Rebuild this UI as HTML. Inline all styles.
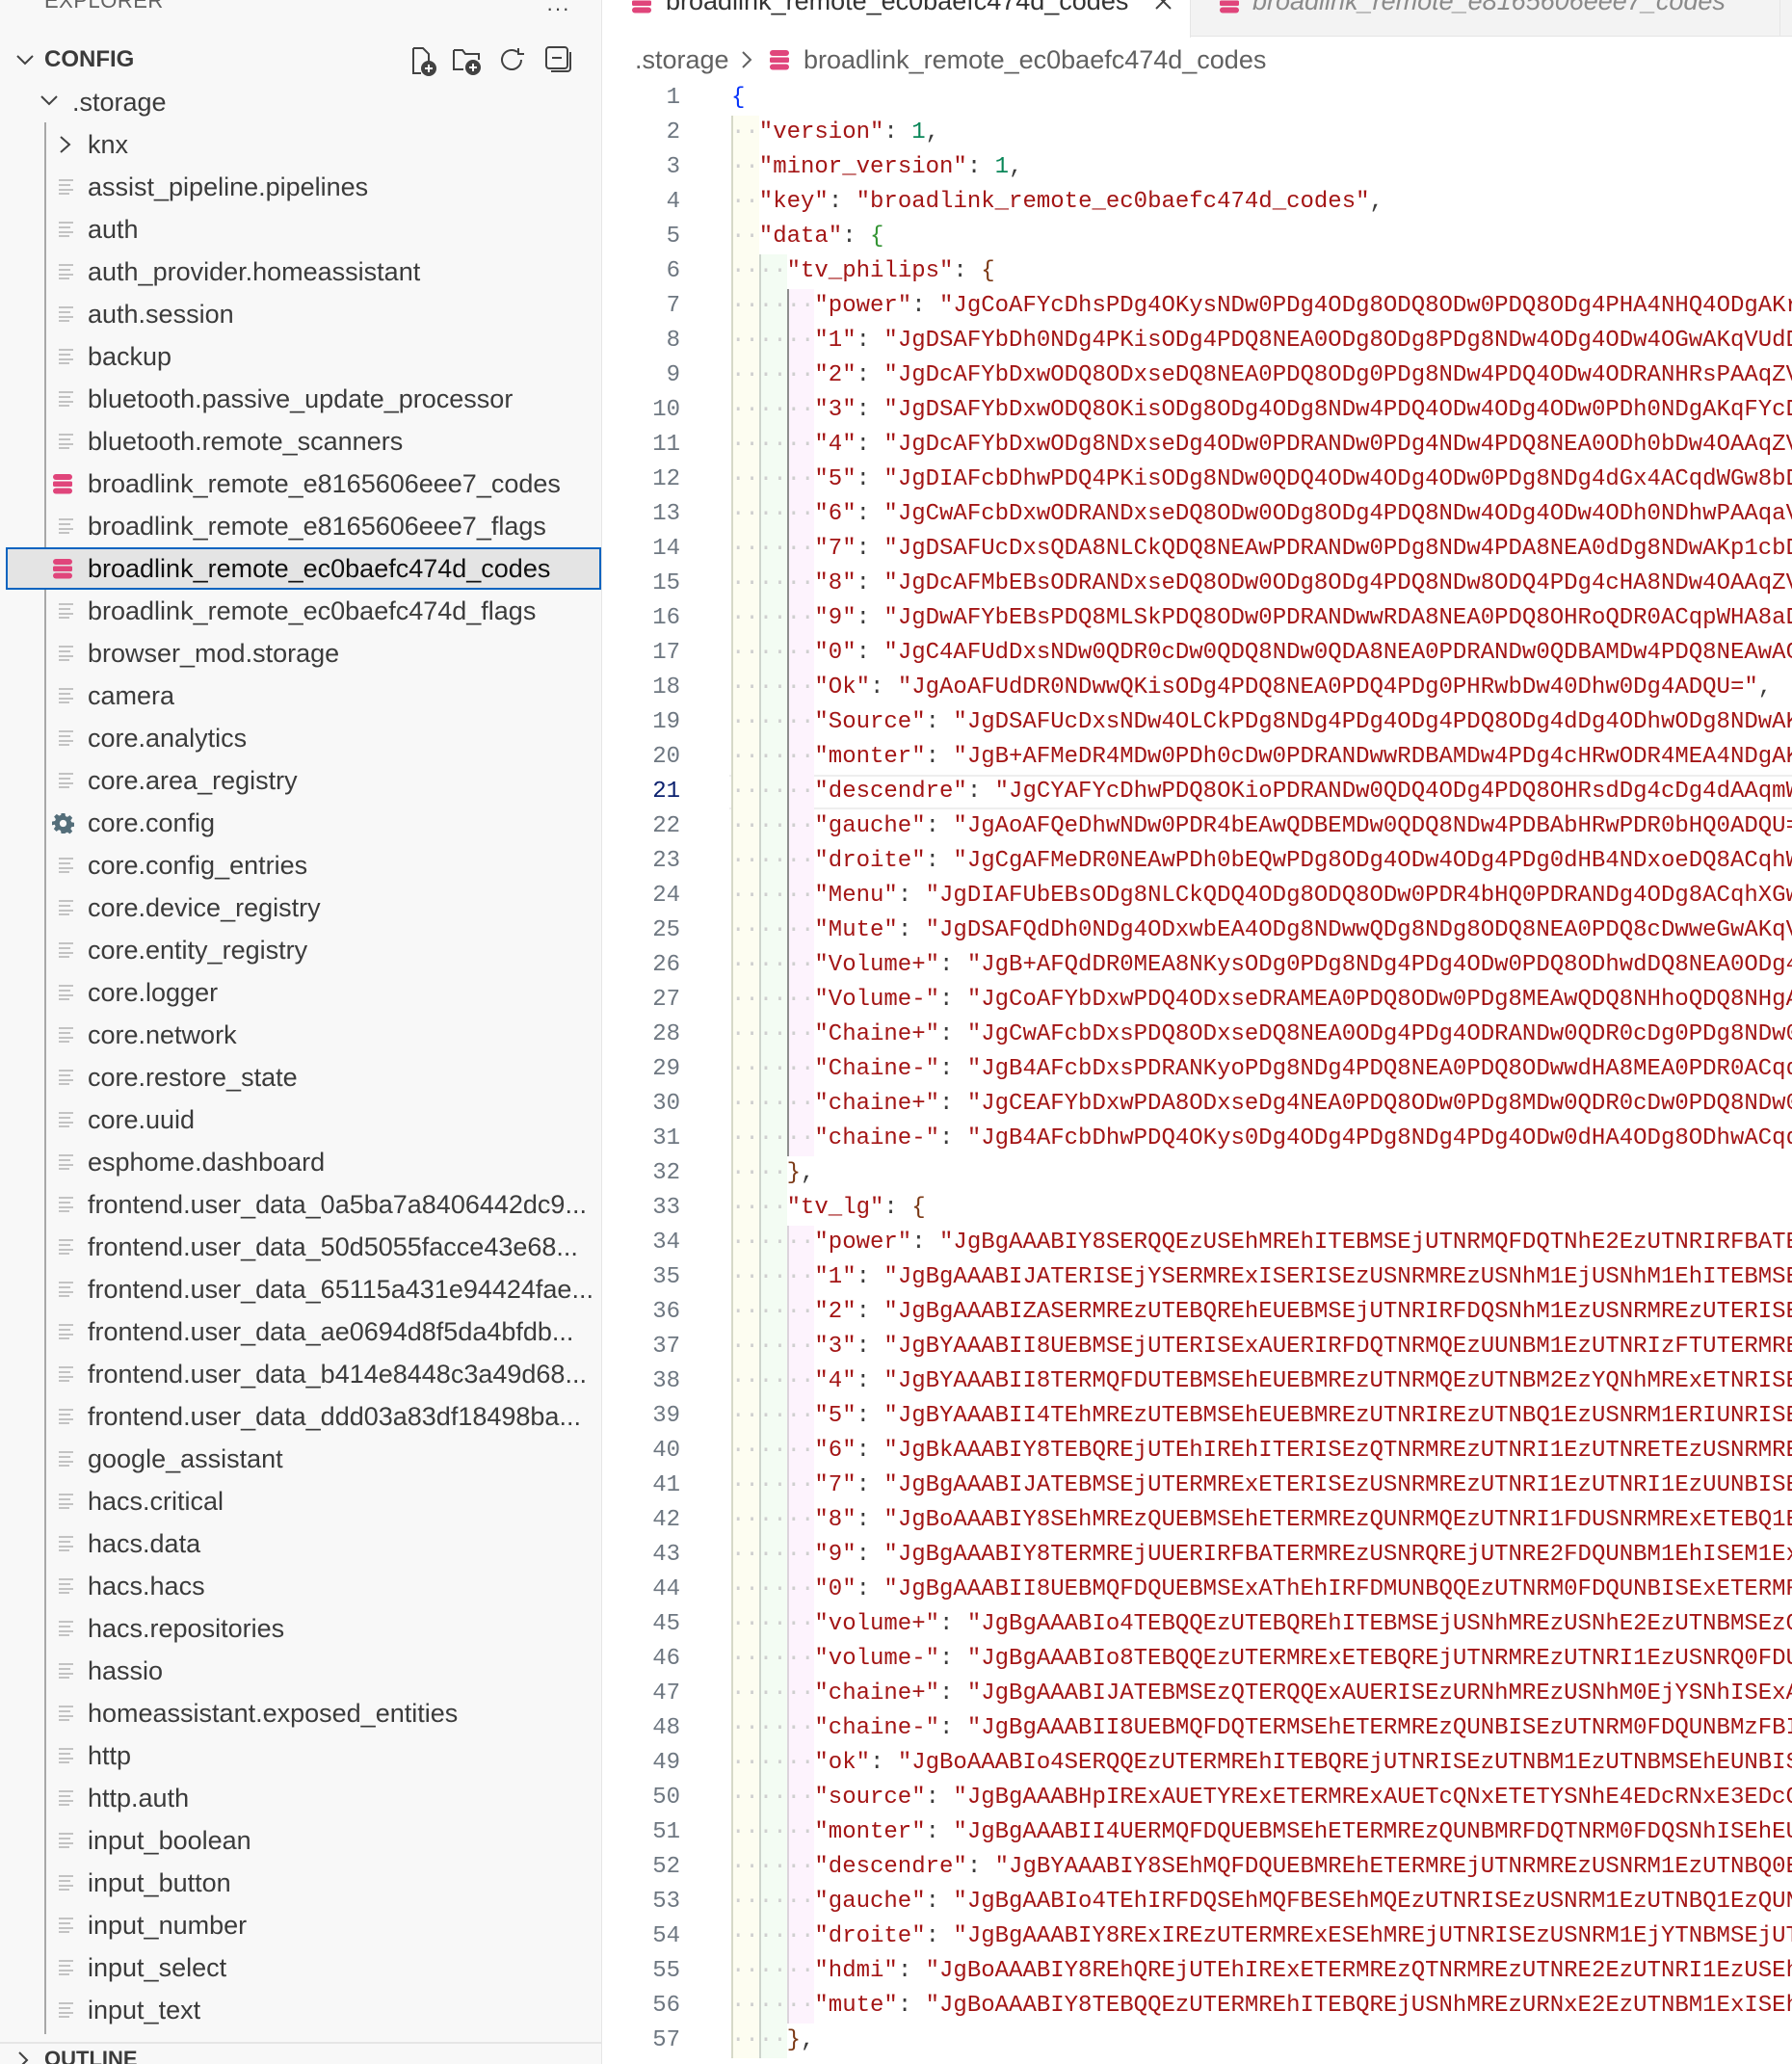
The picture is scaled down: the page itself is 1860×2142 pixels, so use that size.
<!DOCTYPE html>
<html><head><meta charset="utf-8"><style>
*{margin:0;padding:0;box-sizing:border-box}
html,body{width:1860px;height:2142px;overflow:hidden;background:#fff;position:relative}
body{font-family:"Liberation Sans",Arial,sans-serif;color:#3b3b3b}
#side{position:absolute;left:0;top:0;width:625px;height:2142px;background:#f8f8f8;border-right:1px solid #e5e5e5}
.row{position:absolute;left:0;width:624px;height:44px;line-height:44px;font-size:27px;white-space:nowrap;overflow:hidden}
.row .t{position:absolute;left:91px;top:0}
.fi{position:absolute;left:61px;top:14px}
#tabs{position:absolute;left:626px;top:0;width:1234px;height:38px;background:#f3f3f3;border-bottom:1px solid #e5e5e5}
.code{position:absolute;left:0;height:36px;width:1860px;font-family:"Liberation Mono","DejaVu Sans Mono",monospace;font-size:24px;line-height:36px;white-space:pre;overflow:hidden}
.code .n{position:absolute;left:626px;width:80px;text-align:right;color:#6e7781}
.code .c{position:absolute;left:759px;top:0;height:36px}
i{font-style:normal;display:inline-block;width:28.8px;height:36px;vertical-align:top;color:#cfcfcf;letter-spacing:0}
i.a{background:#fdfdf1;box-shadow:inset 2px 0 0 #d6d9c8}
i.b{background:#f3fcf3;box-shadow:inset 2px 0 0 #cdd4cd}
i.e{background:#fdf3fd;box-shadow:inset 2px 0 0 #dcd4dc}
i.d{background:#fdf3fd;box-shadow:inset 2px 0 0 #8e8e8e}
.k{color:#a31515}.s{color:#a31515}.p{color:#3b3b3b}.num{color:#098658}
.b1{color:#0431fa}.b2{color:#319331}.b3{color:#7b3814}
</style></head><body>
<div id="side">
  <div style="position:absolute;left:46px;top:-12px;font-size:22px;color:#616161;letter-spacing:0.5px">EXPLORER</div>
  <div style="position:absolute;left:567px;top:-4px;font-size:22px;color:#424242;letter-spacing:1px">···</div>
  <svg style="position:absolute;left:16px;top:54px" width="20" height="16"><polyline points="2,4 10,12 18,4" fill="none" stroke="#424242" stroke-width="2"/></svg>
  <div style="position:absolute;left:46px;top:40px;line-height:44px;font-size:24px;font-weight:bold;color:#3b3b3b">CONFIG</div>
  <svg style="position:absolute;left:426px;top:47px" width="28" height="32" viewBox="0 0 28 32" fill="none" stroke="#424242" stroke-width="2"><path d="M3 3h10l6 6v10"/><path d="M3 3v26h8"/><circle cx="19" cy="24" r="7" fill="#424242"/><path d="M19 20v8M15 24h8" stroke="#fff"/></svg>
  <svg style="position:absolute;left:469px;top:48px" width="34" height="30" viewBox="0 0 34 30" fill="none" stroke="#424242" stroke-width="2"><path d="M2 4h9l3 4h14v6"/><path d="M2 4v20h10"/><circle cx="22" cy="22" r="7" fill="#424242"/><path d="M22 18v8M18 22h8" stroke="#fff"/></svg>
  <svg style="position:absolute;left:518px;top:48px" width="28" height="28" viewBox="0 0 28 28" fill="none" stroke="#424242" stroke-width="2"><path d="M23 14a10 10 0 1 1-4-8"/><path d="M20 2v6h6" /></svg>
  <svg style="position:absolute;left:565px;top:47px" width="30" height="30" viewBox="0 0 30 30" fill="none" stroke="#424242" stroke-width="2"><rect x="2" y="2" width="22" height="22" rx="3"/><path d="M8 13h10"/><path d="M27 7v17a3 3 0 0 1-3 3H7"/></svg>
  <svg style="position:absolute;left:41px;top:96px" width="20" height="16"><polyline points="2,4 10,12 18,4" fill="none" stroke="#424242" stroke-width="2"/></svg>
  <div class="row" style="top:84px"><span class="t" style="left:75px">.storage</span></div>
  <div style="position:absolute;left:46px;top:127px;width:2px;height:1984px;background:#a8a8a8"></div>
  <div class="row" style="top:568px;background:#e4e4e4;border:2px solid #0a64c0;left:6px;width:618px"></div>
  <div style="position:absolute;left:0;top:2119px;width:624px;height:2px;background:#e5e5e5"></div>
  <div style="position:absolute;left:46px;top:2124px;font-size:22px;font-weight:bold;color:#3b3b3b">OUTLINE</div>
  <svg style="position:absolute;left:16px;top:2128px" width="16" height="20"><polyline points="4,2 12,10 4,18" fill="none" stroke="#424242" stroke-width="2"/></svg>
</div>
<div style="position:absolute;left:0;top:0">
<svg style="position:absolute;left:60px;top:140px" width="16" height="20"><polyline points="3,2 12,10 3,18" fill="none" stroke="#424242" stroke-width="2"/></svg>
<div class="row" style="top:128px"><span class="t">knx</span></div>
<div class="row" style="top:172px"><svg class="fi" width="18" height="16"><g stroke="#c3c3c3" stroke-width="2"><path d="M0 1h15M0 6h12M0 11h15M0 15h11"/></g></svg><span class="t">assist_pipeline.pipelines</span></div>
<div class="row" style="top:216px"><svg class="fi" width="18" height="16"><g stroke="#c3c3c3" stroke-width="2"><path d="M0 1h15M0 6h12M0 11h15M0 15h11"/></g></svg><span class="t">auth</span></div>
<div class="row" style="top:260px"><svg class="fi" width="18" height="16"><g stroke="#c3c3c3" stroke-width="2"><path d="M0 1h15M0 6h12M0 11h15M0 15h11"/></g></svg><span class="t">auth_provider.homeassistant</span></div>
<div class="row" style="top:304px"><svg class="fi" width="18" height="16"><g stroke="#c3c3c3" stroke-width="2"><path d="M0 1h15M0 6h12M0 11h15M0 15h11"/></g></svg><span class="t">auth.session</span></div>
<div class="row" style="top:348px"><svg class="fi" width="18" height="16"><g stroke="#c3c3c3" stroke-width="2"><path d="M0 1h15M0 6h12M0 11h15M0 15h11"/></g></svg><span class="t">backup</span></div>
<div class="row" style="top:392px"><svg class="fi" width="18" height="16"><g stroke="#c3c3c3" stroke-width="2"><path d="M0 1h15M0 6h12M0 11h15M0 15h11"/></g></svg><span class="t">bluetooth.passive_update_processor</span></div>
<div class="row" style="top:436px"><svg class="fi" width="18" height="16"><g stroke="#c3c3c3" stroke-width="2"><path d="M0 1h15M0 6h12M0 11h15M0 15h11"/></g></svg><span class="t">bluetooth.remote_scanners</span></div>
<div class="row" style="top:480px"><svg style="position:absolute;left:54px;top:11px" width="22" height="22" viewBox="0 0 22 22" fill="#e0457b"><rect x="1" y="1" width="20" height="6" rx="3"/><rect x="1" y="8.5" width="20" height="5.5" rx="1.5"/><rect x="1" y="15.5" width="20" height="6" rx="3"/></svg><span class="t">broadlink_remote_e8165606eee7_codes</span></div>
<div class="row" style="top:524px"><svg class="fi" width="18" height="16"><g stroke="#c3c3c3" stroke-width="2"><path d="M0 1h15M0 6h12M0 11h15M0 15h11"/></g></svg><span class="t">broadlink_remote_e8165606eee7_flags</span></div>
<div class="row" style="top:568px;color:#111"><svg style="position:absolute;left:54px;top:11px" width="22" height="22" viewBox="0 0 22 22" fill="#e0457b"><rect x="1" y="1" width="20" height="6" rx="3"/><rect x="1" y="8.5" width="20" height="5.5" rx="1.5"/><rect x="1" y="15.5" width="20" height="6" rx="3"/></svg><span class="t">broadlink_remote_ec0baefc474d_codes</span></div>
<div class="row" style="top:612px"><svg class="fi" width="18" height="16"><g stroke="#c3c3c3" stroke-width="2"><path d="M0 1h15M0 6h12M0 11h15M0 15h11"/></g></svg><span class="t">broadlink_remote_ec0baefc474d_flags</span></div>
<div class="row" style="top:656px"><svg class="fi" width="18" height="16"><g stroke="#c3c3c3" stroke-width="2"><path d="M0 1h15M0 6h12M0 11h15M0 15h11"/></g></svg><span class="t">browser_mod.storage</span></div>
<div class="row" style="top:700px"><svg class="fi" width="18" height="16"><g stroke="#c3c3c3" stroke-width="2"><path d="M0 1h15M0 6h12M0 11h15M0 15h11"/></g></svg><span class="t">camera</span></div>
<div class="row" style="top:744px"><svg class="fi" width="18" height="16"><g stroke="#c3c3c3" stroke-width="2"><path d="M0 1h15M0 6h12M0 11h15M0 15h11"/></g></svg><span class="t">core.analytics</span></div>
<div class="row" style="top:788px"><svg class="fi" width="18" height="16"><g stroke="#c3c3c3" stroke-width="2"><path d="M0 1h15M0 6h12M0 11h15M0 15h11"/></g></svg><span class="t">core.area_registry</span></div>
<div class="row" style="top:832px"><svg style="position:absolute;left:54px;top:11px" width="23" height="23" viewBox="0 0 24 24"><path fill="#546e7a" d="M10 1h4l.6 3.2 2 .9 2.7-1.9 2.8 2.8-1.9 2.7.9 2 3.2.6v4l-3.2.6-.9 2 1.9 2.7-2.8 2.8-2.7-1.9-2 .9L14 23h-4l-.6-3.2-2-.9-2.7 1.9-2.8-2.8 1.9-2.7-.9-2L0 14v-4l3.2-.6.9-2-1.9-2.7 2.8-2.8 2.7 1.9 2-.9z"/><circle cx="12" cy="12" r="3.8" fill="#f8f8f8"/></svg><span class="t">core.config</span></div>
<div class="row" style="top:876px"><svg class="fi" width="18" height="16"><g stroke="#c3c3c3" stroke-width="2"><path d="M0 1h15M0 6h12M0 11h15M0 15h11"/></g></svg><span class="t">core.config_entries</span></div>
<div class="row" style="top:920px"><svg class="fi" width="18" height="16"><g stroke="#c3c3c3" stroke-width="2"><path d="M0 1h15M0 6h12M0 11h15M0 15h11"/></g></svg><span class="t">core.device_registry</span></div>
<div class="row" style="top:964px"><svg class="fi" width="18" height="16"><g stroke="#c3c3c3" stroke-width="2"><path d="M0 1h15M0 6h12M0 11h15M0 15h11"/></g></svg><span class="t">core.entity_registry</span></div>
<div class="row" style="top:1008px"><svg class="fi" width="18" height="16"><g stroke="#c3c3c3" stroke-width="2"><path d="M0 1h15M0 6h12M0 11h15M0 15h11"/></g></svg><span class="t">core.logger</span></div>
<div class="row" style="top:1052px"><svg class="fi" width="18" height="16"><g stroke="#c3c3c3" stroke-width="2"><path d="M0 1h15M0 6h12M0 11h15M0 15h11"/></g></svg><span class="t">core.network</span></div>
<div class="row" style="top:1096px"><svg class="fi" width="18" height="16"><g stroke="#c3c3c3" stroke-width="2"><path d="M0 1h15M0 6h12M0 11h15M0 15h11"/></g></svg><span class="t">core.restore_state</span></div>
<div class="row" style="top:1140px"><svg class="fi" width="18" height="16"><g stroke="#c3c3c3" stroke-width="2"><path d="M0 1h15M0 6h12M0 11h15M0 15h11"/></g></svg><span class="t">core.uuid</span></div>
<div class="row" style="top:1184px"><svg class="fi" width="18" height="16"><g stroke="#c3c3c3" stroke-width="2"><path d="M0 1h15M0 6h12M0 11h15M0 15h11"/></g></svg><span class="t">esphome.dashboard</span></div>
<div class="row" style="top:1228px"><svg class="fi" width="18" height="16"><g stroke="#c3c3c3" stroke-width="2"><path d="M0 1h15M0 6h12M0 11h15M0 15h11"/></g></svg><span class="t">frontend.user_data_0a5ba7a8406442dc9...</span></div>
<div class="row" style="top:1272px"><svg class="fi" width="18" height="16"><g stroke="#c3c3c3" stroke-width="2"><path d="M0 1h15M0 6h12M0 11h15M0 15h11"/></g></svg><span class="t">frontend.user_data_50d5055facce43e68...</span></div>
<div class="row" style="top:1316px"><svg class="fi" width="18" height="16"><g stroke="#c3c3c3" stroke-width="2"><path d="M0 1h15M0 6h12M0 11h15M0 15h11"/></g></svg><span class="t">frontend.user_data_65115a431e94424fae...</span></div>
<div class="row" style="top:1360px"><svg class="fi" width="18" height="16"><g stroke="#c3c3c3" stroke-width="2"><path d="M0 1h15M0 6h12M0 11h15M0 15h11"/></g></svg><span class="t">frontend.user_data_ae0694d8f5da4bfdb...</span></div>
<div class="row" style="top:1404px"><svg class="fi" width="18" height="16"><g stroke="#c3c3c3" stroke-width="2"><path d="M0 1h15M0 6h12M0 11h15M0 15h11"/></g></svg><span class="t">frontend.user_data_b414e8448c3a49d68...</span></div>
<div class="row" style="top:1448px"><svg class="fi" width="18" height="16"><g stroke="#c3c3c3" stroke-width="2"><path d="M0 1h15M0 6h12M0 11h15M0 15h11"/></g></svg><span class="t">frontend.user_data_ddd03a83df18498ba...</span></div>
<div class="row" style="top:1492px"><svg class="fi" width="18" height="16"><g stroke="#c3c3c3" stroke-width="2"><path d="M0 1h15M0 6h12M0 11h15M0 15h11"/></g></svg><span class="t">google_assistant</span></div>
<div class="row" style="top:1536px"><svg class="fi" width="18" height="16"><g stroke="#c3c3c3" stroke-width="2"><path d="M0 1h15M0 6h12M0 11h15M0 15h11"/></g></svg><span class="t">hacs.critical</span></div>
<div class="row" style="top:1580px"><svg class="fi" width="18" height="16"><g stroke="#c3c3c3" stroke-width="2"><path d="M0 1h15M0 6h12M0 11h15M0 15h11"/></g></svg><span class="t">hacs.data</span></div>
<div class="row" style="top:1624px"><svg class="fi" width="18" height="16"><g stroke="#c3c3c3" stroke-width="2"><path d="M0 1h15M0 6h12M0 11h15M0 15h11"/></g></svg><span class="t">hacs.hacs</span></div>
<div class="row" style="top:1668px"><svg class="fi" width="18" height="16"><g stroke="#c3c3c3" stroke-width="2"><path d="M0 1h15M0 6h12M0 11h15M0 15h11"/></g></svg><span class="t">hacs.repositories</span></div>
<div class="row" style="top:1712px"><svg class="fi" width="18" height="16"><g stroke="#c3c3c3" stroke-width="2"><path d="M0 1h15M0 6h12M0 11h15M0 15h11"/></g></svg><span class="t">hassio</span></div>
<div class="row" style="top:1756px"><svg class="fi" width="18" height="16"><g stroke="#c3c3c3" stroke-width="2"><path d="M0 1h15M0 6h12M0 11h15M0 15h11"/></g></svg><span class="t">homeassistant.exposed_entities</span></div>
<div class="row" style="top:1800px"><svg class="fi" width="18" height="16"><g stroke="#c3c3c3" stroke-width="2"><path d="M0 1h15M0 6h12M0 11h15M0 15h11"/></g></svg><span class="t">http</span></div>
<div class="row" style="top:1844px"><svg class="fi" width="18" height="16"><g stroke="#c3c3c3" stroke-width="2"><path d="M0 1h15M0 6h12M0 11h15M0 15h11"/></g></svg><span class="t">http.auth</span></div>
<div class="row" style="top:1888px"><svg class="fi" width="18" height="16"><g stroke="#c3c3c3" stroke-width="2"><path d="M0 1h15M0 6h12M0 11h15M0 15h11"/></g></svg><span class="t">input_boolean</span></div>
<div class="row" style="top:1932px"><svg class="fi" width="18" height="16"><g stroke="#c3c3c3" stroke-width="2"><path d="M0 1h15M0 6h12M0 11h15M0 15h11"/></g></svg><span class="t">input_button</span></div>
<div class="row" style="top:1976px"><svg class="fi" width="18" height="16"><g stroke="#c3c3c3" stroke-width="2"><path d="M0 1h15M0 6h12M0 11h15M0 15h11"/></g></svg><span class="t">input_number</span></div>
<div class="row" style="top:2020px"><svg class="fi" width="18" height="16"><g stroke="#c3c3c3" stroke-width="2"><path d="M0 1h15M0 6h12M0 11h15M0 15h11"/></g></svg><span class="t">input_select</span></div>
<div class="row" style="top:2064px"><svg class="fi" width="18" height="16"><g stroke="#c3c3c3" stroke-width="2"><path d="M0 1h15M0 6h12M0 11h15M0 15h11"/></g></svg><span class="t">input_text</span></div>
</div>

<div id="tabs">
  <div style="position:absolute;left:0;top:0;width:610px;height:39px;background:#fff;border-right:1px solid #e5e5e5"></div>
  <svg style="position:absolute;left:29px;top:-8px" width="22" height="22" viewBox="0 0 22 22" fill="#e0457b"><rect x="1" y="1" width="20" height="6" rx="3"/><rect x="1" y="8.5" width="20" height="5.5" rx="1.5"/><rect x="1" y="15.5" width="20" height="6" rx="3"/></svg>
  <div style="position:absolute;left:65px;top:-14px;font-size:27px;color:#333;white-space:nowrap">broadlink_remote_ec0baefc474d_codes</div>
  <svg style="position:absolute;left:573px;top:-4px" width="18" height="16"><path d="M1 -2L16 13M16 -2L1 13" stroke="#424242" stroke-width="2"/></svg>
  <svg style="position:absolute;left:639px;top:-8px" width="22" height="22" viewBox="0 0 22 22" fill="#e0457b"><rect x="1" y="1" width="20" height="6" rx="3"/><rect x="1" y="8.5" width="20" height="5.5" rx="1.5"/><rect x="1" y="15.5" width="20" height="6" rx="3"/></svg>
  <div style="position:absolute;left:674px;top:-14px;font-size:27px;color:#8a8a8a;font-style:italic;white-space:nowrap">broadlink_remote_e8165606eee7_codes</div>
  <div style="position:absolute;left:1221px;top:0;width:1px;height:38px;background:#e5e5e5"></div>
</div>
<div style="position:absolute;left:659px;top:44px;font-size:27px;color:#616161;line-height:36px;white-space:nowrap">.storage</div>
<svg style="position:absolute;left:768px;top:52px" width="14" height="20"><polyline points="3,2 11,10 3,18" fill="none" stroke="#616161" stroke-width="2"/></svg>
<svg style="position:absolute;left:798px;top:51px" width="22" height="22" viewBox="0 0 22 22" fill="#e0457b"><rect x="1" y="1" width="20" height="6" rx="3"/><rect x="1" y="8.5" width="20" height="5.5" rx="1.5"/><rect x="1" y="15.5" width="20" height="6" rx="3"/></svg>
<div style="position:absolute;left:834px;top:44px;font-size:27px;color:#616161;line-height:36px;white-space:nowrap">broadlink_remote_ec0baefc474d_codes</div>

<div style="position:absolute;left:757px;top:804px;width:1103px;height:36px;border-top:2px solid #eeeeee;border-bottom:2px solid #eeeeee"></div>

<div class="code" style="top:84px"><span class="n">1</span><span class="c"><span class="b1">{</span></span></div>
<div class="code" style="top:120px"><span class="n">2</span><span class="c"><i class="a">··</i><span class="k">"version"</span><span class="p">: </span><span class="num">1</span><span class="p">,</span></span></div>
<div class="code" style="top:156px"><span class="n">3</span><span class="c"><i class="a">··</i><span class="k">"minor_version"</span><span class="p">: </span><span class="num">1</span><span class="p">,</span></span></div>
<div class="code" style="top:192px"><span class="n">4</span><span class="c"><i class="a">··</i><span class="k">"key"</span><span class="p">: </span><span class="s">"broadlink_remote_ec0baefc474d_codes"</span><span class="p">,</span></span></div>
<div class="code" style="top:228px"><span class="n">5</span><span class="c"><i class="a">··</i><span class="k">"data"</span><span class="p">: </span><span class="b2">{</span></span></div>
<div class="code" style="top:264px"><span class="n">6</span><span class="c"><i class="a">··</i><i class="b">··</i><span class="k">"tv_philips"</span><span class="p">: </span><span class="b3">{</span></span></div>
<div class="code" style="top:300px"><span class="n">7</span><span class="c"><i class="a">··</i><i class="b">··</i><i class="d">··</i><span class="k">"power"</span><span class="p">: </span><span class="s">"JgCoAFYcDhsPDg4OKysNDw0PDg4ODg8ODQ8ODw0PDQ8ODg4PHA4NHQ4ODgAKrVcbDw</span></span></div>
<div class="code" style="top:336px"><span class="n">8</span><span class="c"><i class="a">··</i><i class="b">··</i><i class="d">··</i><span class="k">"1"</span><span class="p">: </span><span class="s">"JgDSAFYbDh0NDg4PKisODg4PDQ8NEA0ODg8ODg8PDg8NDw4ODg4ODw4OGwAKqVUdDhwP</span></span></div>
<div class="code" style="top:372px"><span class="n">9</span><span class="c"><i class="a">··</i><i class="b">··</i><i class="d">··</i><span class="k">"2"</span><span class="p">: </span><span class="s">"JgDcAFYbDxwODQ8ODxseDQ8NEA0PDQ8ODg0PDg8NDw4PDQ4ODw4ODRANHRsPAAqZVxsP</span></span></div>
<div class="code" style="top:408px"><span class="n">10</span><span class="c"><i class="a">··</i><i class="b">··</i><i class="d">··</i><span class="k">"3"</span><span class="p">: </span><span class="s">"JgDSAFYbDxwODQ8OKisODg8ODg4ODg8NDw4PDQ4ODw4ODg4ODw0PDh0NDgAKqFYcDxwO</span></span></div>
<div class="code" style="top:444px"><span class="n">11</span><span class="c"><i class="a">··</i><i class="b">··</i><i class="d">··</i><span class="k">"4"</span><span class="p">: </span><span class="s">"JgDcAFYbDxwODg8NDxseDg4ODw0PDRANDw0PDg4NDw4PDQ8NEA0ODh0bDw4OAAqZVxsO</span></span></div>
<div class="code" style="top:480px"><span class="n">12</span><span class="c"><i class="a">··</i><i class="b">··</i><i class="d">··</i><span class="k">"5"</span><span class="p">: </span><span class="s">"JgDIAFcbDhwPDQ4PKisODg8NDw0QDQ4ODw4ODg4ODw0PDg8NDg4dGx4ACqdWGw8bDxwO</span></span></div>
<div class="code" style="top:516px"><span class="n">13</span><span class="c"><i class="a">··</i><i class="b">··</i><i class="d">··</i><span class="k">"6"</span><span class="p">: </span><span class="s">"JgCwAFcbDxwODRANDxseDQ8ODw0ODg8ODg4PDQ8NDw4ODg4ODw4ODh0NDhwPAAqaVxsP</span></span></div>
<div class="code" style="top:552px"><span class="n">14</span><span class="c"><i class="a">··</i><i class="b">··</i><i class="d">··</i><span class="k">"7"</span><span class="p">: </span><span class="s">"JgDSAFUcDxsQDA8NLCkQDQ8NEAwPDRANDw0PDg8NDw4PDA8NEA0dDg8NDwAKp1cbDxsQ</span></span></div>
<div class="code" style="top:588px"><span class="n">15</span><span class="c"><i class="a">··</i><i class="b">··</i><i class="d">··</i><span class="k">"8"</span><span class="p">: </span><span class="s">"JgDcAFMbEBsODRANDxseDQ8ODw0ODg8ODg4PDQ8NDw8ODQ4PDg4cHA8NDw4OAAqZVxsO</span></span></div>
<div class="code" style="top:624px"><span class="n">16</span><span class="c"><i class="a">··</i><i class="b">··</i><i class="d">··</i><span class="k">"9"</span><span class="p">: </span><span class="s">"JgDwAFYbEBsPDQ8MLSkPDQ8ODw0PDRANDwwRDA8NEA0PDQ8OHRoQDR0ACqpWHA8aDhwP</span></span></div>
<div class="code" style="top:660px"><span class="n">17</span><span class="c"><i class="a">··</i><i class="b">··</i><i class="d">··</i><span class="k">"0"</span><span class="p">: </span><span class="s">"JgC4AFUdDxsNDw0QDR0cDw0QDQ8NDw0QDA8NEA0PDRANDw0QDBAMDw4PDQ8NEAwACrVc</span></span></div>
<div class="code" style="top:696px"><span class="n">18</span><span class="c"><i class="a">··</i><i class="b">··</i><i class="d">··</i><span class="k">"Ok"</span><span class="p">: </span><span class="s">"JgAoAFUdDR0NDwwQKisODg4PDQ8NEA0PDQ4PDg0PHRwbDw40Dhw0Dg4ADQU="</span><span class="p">,</span></span></div>
<div class="code" style="top:732px"><span class="n">19</span><span class="c"><i class="a">··</i><i class="b">··</i><i class="d">··</i><span class="k">"Source"</span><span class="p">: </span><span class="s">"JgDSAFUcDxsNDw4OLCkPDg8NDg4PDg4ODg4PDQ8ODg4dDg4ODhwODg8NDwAKqFYb</span></span></div>
<div class="code" style="top:768px"><span class="n">20</span><span class="c"><i class="a">··</i><i class="b">··</i><i class="d">··</i><span class="k">"monter"</span><span class="p">: </span><span class="s">"JgB+AFMeDR4MDw0PDh0cDw0PDRANDwwRDBAMDw4PDg4cHRwODR4MEA4NDgAKqFYb</span></span></div>
<div class="code" style="top:804px"><span class="n" style="color:#0b216f">21</span><span class="c"><i class="a">··</i><i class="b">··</i><i class="d">··</i><span class="k">"descendre"</span><span class="p">: </span><span class="s">"JgCYAFYcDhwPDQ8OKioPDRANDw0QDQ4ODg4PDQ8OHRsdDg4cDg4dAAqmWhwODg</span></span></div>
<div class="code" style="top:840px"><span class="n">22</span><span class="c"><i class="a">··</i><i class="b">··</i><i class="d">··</i><span class="k">"gauche"</span><span class="p">: </span><span class="s">"JgAoAFQeDhwNDw0PDR4bEAwQDBEMDw0QDQ8NDw4PDBAbHRwPDR0bHQ0ADQU="</span><span class="p">,</span></span></div>
<div class="code" style="top:876px"><span class="n">23</span><span class="c"><i class="a">··</i><i class="b">··</i><i class="d">··</i><span class="k">"droite"</span><span class="p">: </span><span class="s">"JgCgAFMeDR0NEAwPDh0bEQwPDg8ODg4ODw4ODg4PDg0dHB4NDxoeDQ8ACqhWGw0c</span></span></div>
<div class="code" style="top:912px"><span class="n">24</span><span class="c"><i class="a">··</i><i class="b">··</i><i class="d">··</i><span class="k">"Menu"</span><span class="p">: </span><span class="s">"JgDIAFUbEBsODg8NLCkQDQ4ODg8ODQ8ODw0PDR4bHQ0PDRANDg4ODg8ACqhXGw8bDx</span></span></div>
<div class="code" style="top:948px"><span class="n">25</span><span class="c"><i class="a">··</i><i class="b">··</i><i class="d">··</i><span class="k">"Mute"</span><span class="p">: </span><span class="s">"JgDSAFQdDh0NDg4ODxwbEA4ODg8NDwwQDg8NDg8ODQ8NEA0PDQ8cDwweGwAKqVcbDx</span></span></div>
<div class="code" style="top:984px"><span class="n">26</span><span class="c"><i class="a">··</i><i class="b">··</i><i class="d">··</i><span class="k">"Volume+"</span><span class="p">: </span><span class="s">"JgB+AFQdDR0MEA8NKysODg0PDg8NDg4PDg4ODw0PDQ8ODhwdDQ8NEA0ODg4ACqhWGw</span></span></div>
<div class="code" style="top:1020px"><span class="n">27</span><span class="c"><i class="a">··</i><i class="b">··</i><i class="d">··</i><span class="k">"Volume-"</span><span class="p">: </span><span class="s">"JgCoAFYbDxwPDQ4ODxseDRAMEA0PDQ8ODw0PDg8MEAwQDQ8NHhoQDQ8NHgAKqVcbDw</span></span></div>
<div class="code" style="top:1056px"><span class="n">28</span><span class="c"><i class="a">··</i><i class="b">··</i><i class="d">··</i><span class="k">"Chaine+"</span><span class="p">: </span><span class="s">"JgCwAFcbDxsPDQ8ODxseDQ8NEA0ODg4PDg4ODRANDw0QDR0cDg0PDg8NDw0ACqhWGw</span></span></div>
<div class="code" style="top:1092px"><span class="n">29</span><span class="c"><i class="a">··</i><i class="b">··</i><i class="d">··</i><span class="k">"Chaine-"</span><span class="p">: </span><span class="s">"JgB4AFcbDxsPDRANKyoPDg8NDg4PDQ8NEA0PDQ8ODwwdHA8MEA0PDR0ACqdXGw8bDw</span></span></div>
<div class="code" style="top:1128px"><span class="n">30</span><span class="c"><i class="a">··</i><i class="b">··</i><i class="d">··</i><span class="k">"chaine+"</span><span class="p">: </span><span class="s">"JgCEAFYbDxwPDA8ODxseDg4NEA0PDQ8ODw0PDg8MDw0QDR0cDw0PDQ8NDw0ODgAKqV</span></span></div>
<div class="code" style="top:1164px"><span class="n">31</span><span class="c"><i class="a">··</i><i class="b">··</i><i class="d">··</i><span class="k">"chaine-"</span><span class="p">: </span><span class="s">"JgB4AFcbDhwPDQ4OKys0Dg4ODg4PDg8NDg4PDg4ODw0dHA4ODg8ODhwACqdXGw0bDw</span></span></div>
<div class="code" style="top:1200px"><span class="n">32</span><span class="c"><i class="a">··</i><i class="b">··</i><span class="b3">}</span><span class="p">,</span></span></div>
<div class="code" style="top:1236px"><span class="n">33</span><span class="c"><i class="a">··</i><i class="b">··</i><span class="k">"tv_lg"</span><span class="p">: </span><span class="b3">{</span></span></div>
<div class="code" style="top:1272px"><span class="n">34</span><span class="c"><i class="a">··</i><i class="b">··</i><i class="e">··</i><span class="k">"power"</span><span class="p">: </span><span class="s">"JgBgAAABIY8SERQQEzUSEhMREhITEBMSEjUTNRMQFDQTNhE2EzUTNRIRFBATEhMR</span></span></div>
<div class="code" style="top:1308px"><span class="n">35</span><span class="c"><i class="a">··</i><i class="b">··</i><i class="e">··</i><span class="k">"1"</span><span class="p">: </span><span class="s">"JgBgAAABIJATERISEjYSERMRExISERISEzUSNRMREzUSNhM1EjUSNhM1EhITEBMSExER</span></span></div>
<div class="code" style="top:1344px"><span class="n">36</span><span class="c"><i class="a">··</i><i class="b">··</i><i class="e">··</i><span class="k">"2"</span><span class="p">: </span><span class="s">"JgBgAAABIZASERMREzUTEBQREhEUEBMSEjUTNRIRFDQSNhM1EzUSNRMREzUTERISEhMR</span></span></div>
<div class="code" style="top:1380px"><span class="n">37</span><span class="c"><i class="a">··</i><i class="b">··</i><i class="e">··</i><span class="k">"3"</span><span class="p">: </span><span class="s">"JgBYAAABII8UEBMSEjUTERISExAUERIRFDQTNRMQEzUUNBM1EzUTNRIzFTUTERMREhIT</span></span></div>
<div class="code" style="top:1416px"><span class="n">38</span><span class="c"><i class="a">··</i><i class="b">··</i><i class="e">··</i><span class="k">"4"</span><span class="p">: </span><span class="s">"JgBYAAABII8TERMQFDUTEBMSEhEUEBMREzUTNRMQEzUTNBM2EzYQNhMRExETNRISEhMR</span></span></div>
<div class="code" style="top:1452px"><span class="n">39</span><span class="c"><i class="a">··</i><i class="b">··</i><i class="e">··</i><span class="k">"5"</span><span class="p">: </span><span class="s">"JgBYAAABII4TEhMREzUTEBMSEhEUEBMREzUTNRIREzUTNBQ1EzUSNRM1ERIUNRISEhMR</span></span></div>
<div class="code" style="top:1488px"><span class="n">40</span><span class="c"><i class="a">··</i><i class="b">··</i><i class="e">··</i><span class="k">"6"</span><span class="p">: </span><span class="s">"JgBkAAABIY8TEBQREjUTEhIREhITERISEzQTNRMREzUTNRI1EzUTNRETEzUSNRMRExIS</span></span></div>
<div class="code" style="top:1524px"><span class="n">41</span><span class="c"><i class="a">··</i><i class="b">··</i><i class="e">··</i><span class="k">"7"</span><span class="p">: </span><span class="s">"JgBgAAABIJATEBMSEjUTERMRExETERISEzUSNRMREzUTNRI1EzUTNRI1EzUUNBISEhMR</span></span></div>
<div class="code" style="top:1560px"><span class="n">42</span><span class="c"><i class="a">··</i><i class="b">··</i><i class="e">··</i><span class="k">"8"</span><span class="p">: </span><span class="s">"JgBoAAABIY8SEhMREzQUEBMSEhETERMREzQUNRMQEzUTNRI1FDUSNRMRExETEBQ1EhIT</span></span></div>
<div class="code" style="top:1596px"><span class="n">43</span><span class="c"><i class="a">··</i><i class="b">··</i><i class="e">··</i><span class="k">"9"</span><span class="p">: </span><span class="s">"JgBgAAABIY8TERMREjUUERIRFBATERMREzUSNRQREjUTNRE2FDQUNBM1EhISEM1ExIS</span></span></div>
<div class="code" style="top:1632px"><span class="n">44</span><span class="c"><i class="a">··</i><i class="b">··</i><i class="e">··</i><span class="k">"0"</span><span class="p">: </span><span class="s">"JgBgAAABII8UEBMQFDQUEBMSExAThEhIRFDMUNBQQEzUTNRM0FDQUNBISExETERMRExIS</span></span></div>
<div class="code" style="top:1668px"><span class="n">45</span><span class="c"><i class="a">··</i><i class="b">··</i><i class="e">··</i><span class="k">"volume+"</span><span class="p">: </span><span class="s">"JgBgAAABIo4TEBQQEzUTEBQREhITEBMSEjUSNhMREzUSNhE2EzUTNBMSEzQTERMR</span></span></div>
<div class="code" style="top:1704px"><span class="n">46</span><span class="c"><i class="a">··</i><i class="b">··</i><i class="e">··</i><span class="k">"volume-"</span><span class="p">: </span><span class="s">"JgBgAAABIo8TEBQQEzUTERMRExETEBQREjUTNRMREzUTNRI1EzUSNRQ0FDUTERMR</span></span></div>
<div class="code" style="top:1740px"><span class="n">47</span><span class="c"><i class="a">··</i><i class="b">··</i><i class="e">··</i><span class="k">"chaine+"</span><span class="p">: </span><span class="s">"JgBgAAABIJATEBMSEzQTERQQExAUERISEzURNhMREzUSNhM0EjYSNhISExAUEBMR</span></span></div>
<div class="code" style="top:1776px"><span class="n">48</span><span class="c"><i class="a">··</i><i class="b">··</i><i class="e">··</i><span class="k">"chaine-"</span><span class="p">: </span><span class="s">"JgBgAAABII8UEBMQFDQTERMSEhETERMREzQUNBISEzUTNRM0FDQUNBMzFBISEhMR</span></span></div>
<div class="code" style="top:1812px"><span class="n">49</span><span class="c"><i class="a">··</i><i class="b">··</i><i class="e">··</i><span class="k">"ok"</span><span class="p">: </span><span class="s">"JgBoAAABIo4SERQQEzUTERMREhITEBQREjUTNRISEzUTNBM1EzUTNBMSEhEUNBISEhMR</span></span></div>
<div class="code" style="top:1848px"><span class="n">50</span><span class="c"><i class="a">··</i><i class="b">··</i><i class="e">··</i><span class="k">"source"</span><span class="p">: </span><span class="s">"JgBgAAABHpIRExAUETYRExETERMRExAUETcQNxETETYSNhE4EDcRNxE3EDcQNxER</span></span></div>
<div class="code" style="top:1884px"><span class="n">51</span><span class="c"><i class="a">··</i><i class="b">··</i><i class="e">··</i><span class="k">"monter"</span><span class="p">: </span><span class="s">"JgBgAAABII4UERMQFDQUEBMSEhETERMREzQUNBMRFDQTNRM0FDQSNhISEhEUEBMR</span></span></div>
<div class="code" style="top:1920px"><span class="n">52</span><span class="c"><i class="a">··</i><i class="b">··</i><i class="e">··</i><span class="k">"descendre"</span><span class="p">: </span><span class="s">"JgBYAAABIY8SEhMQFDQUEBMREhETERMREjUTNRMREzUSNRM1EzUTNBQ0EzUTERMR</span></span></div>
<div class="code" style="top:1956px"><span class="n">53</span><span class="c"><i class="a">··</i><i class="b">··</i><i class="e">··</i><span class="k">"gauche"</span><span class="p">: </span><span class="s">"JgBgAABIo4TEhIRFDQSEhMQFBESEhMQEzUTNRISEzUSNRM1EzUTNBQ1EzQUNBMR</span></span></div>
<div class="code" style="top:1992px"><span class="n">54</span><span class="c"><i class="a">··</i><i class="b">··</i><i class="e">··</i><span class="k">"droite"</span><span class="p">: </span><span class="s">"JgBgAAABIY8RExIREzUTERMRExESEhMREjUTNRISEzUSNRM1EjYTNBMSEjUTERMR</span></span></div>
<div class="code" style="top:2028px"><span class="n">55</span><span class="c"><i class="a">··</i><i class="b">··</i><i class="e">··</i><span class="k">"hdmi"</span><span class="p">: </span><span class="s">"JgBoAAABIY8REhQREjUTEhIRExETERMREzQTNRMREzUTNRE2EzUTNRI1EzUSEhMRExIS</span></span></div>
<div class="code" style="top:2064px"><span class="n">56</span><span class="c"><i class="a">··</i><i class="b">··</i><i class="e">··</i><span class="k">"mute"</span><span class="p">: </span><span class="s">"JgBoAAABIY8TEBQQEzUTERMREhITEBQREjUSNhMREzURNxE2EzUTNBM1ExISEhMR</span></span></div>
<div class="code" style="top:2100px"><span class="n">57</span><span class="c"><i class="a">··</i><i class="b">··</i><span class="b3">}</span><span class="p">,</span></span></div>
</body></html>
